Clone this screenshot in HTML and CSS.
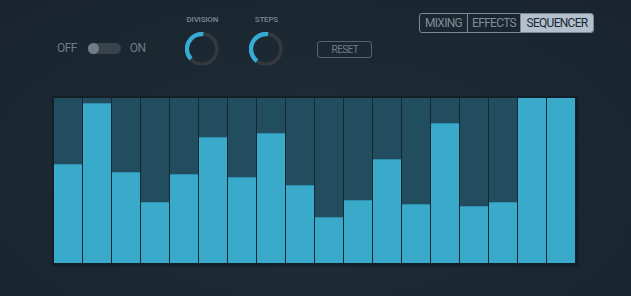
FILE: index.html
```html
<!DOCTYPE html>
<html>
<head>
<meta charset="utf-8">
<link rel="stylesheet" href="styles.css">
</head>
<body>
<div class="app">
  <header class="header">
    <div class="power">
      <span class="power-label">OFF</span>
      <span class="switch"><span class="switch-knob"></span></span>
      <span class="power-label">ON</span>
    </div>
    <div class="knob knob-division">
      <span class="knob-label">DIVISION</span>
      <svg class="knob-dial" width="34" height="34" viewBox="0 0 34 34">
        <circle cx="17" cy="17" r="15" fill="none" stroke="#33393f" stroke-width="3.6"/>
        <path d="M5.85 27.04 A15 15 0 0 1 18.31 2.06" fill="none" stroke="#37abd2" stroke-width="4.4"/>
      </svg>
    </div>
    <div class="knob knob-steps">
      <span class="knob-label">STEPS</span>
      <svg class="knob-dial" width="34" height="34" viewBox="0 0 34 34">
        <circle cx="17" cy="17" r="15" fill="none" stroke="#33393f" stroke-width="3.6"/>
        <path d="M7.97 28.98 A15 15 0 0 1 19.09 2.15" fill="none" stroke="#37abd2" stroke-width="4.4"/>
      </svg>
    </div>
    <button class="reset">RESET</button>
    <nav class="tabs">
      <span class="tab tab-mixing">MIXING</span>
      <span class="tab tab-effects">EFFECTS</span>
      <span class="tab tab-sequencer tab-active">SEQUENCER</span>
    </nav>
  </header>
  <section class="sequencer">
    <div class="step"><div class="fill" style="height:99px"></div></div>
    <div class="step"><div class="fill" style="height:160px"></div></div>
    <div class="step"><div class="fill" style="height:91px"></div></div>
    <div class="step"><div class="fill" style="height:61px"></div></div>
    <div class="step"><div class="fill" style="height:89px"></div></div>
    <div class="step"><div class="fill" style="height:126px"></div></div>
    <div class="step"><div class="fill" style="height:86px"></div></div>
    <div class="step"><div class="fill" style="height:130px"></div></div>
    <div class="step"><div class="fill" style="height:78px"></div></div>
    <div class="step"><div class="fill" style="height:46px"></div></div>
    <div class="step"><div class="fill" style="height:63px"></div></div>
    <div class="step"><div class="fill" style="height:104px"></div></div>
    <div class="step"><div class="fill" style="height:59px"></div></div>
    <div class="step"><div class="fill" style="height:140px"></div></div>
    <div class="step"><div class="fill" style="height:57px"></div></div>
    <div class="step"><div class="fill" style="height:61px"></div></div>
    <div class="step"><div class="fill full" style="height:165px"></div></div>
    <div class="step"><div class="fill full" style="height:165px"></div></div>
  </section>
</div>
</body>
</html>
```

FILE: styles.css
```css
html, body {
  margin: 0;
  padding: 0;
}

body {
  width: 631px;
  height: 296px;
  overflow: hidden;
  background: radial-gradient(ellipse 70% 80% at 50% 60%, #1f2f39 0%, #1b2832 60%, #19242e 100%);
  font-family: Roboto, "Liberation Sans", sans-serif;
}

.app {
  width: 631px;
  height: 296px;
  display: flex;
  flex-direction: column;
}

.header {
  display: flex;
  align-items: flex-start;
  height: 96px;
  padding-left: 57px;
  padding-right: 37px;
  box-sizing: border-box;
}

.power {
  display: flex;
  align-items: center;
  margin-top: 42px;
  height: 13px;
}

.power-label {
  font-size: 12px;
  letter-spacing: -0.6px;
  color: #6f7c87;
  line-height: 13px;
}

.switch {
  position: relative;
  width: 33px;
  height: 11px;
  border-radius: 6px;
  background: #39434b;
  margin: 0 9px 0 11px;
}

.switch-knob {
  position: absolute;
  left: 0;
  top: 0;
  width: 11px;
  height: 11px;
  border-radius: 50%;
  background: #6d7e88;
}

.knob {
  display: flex;
  flex-direction: column;
  align-items: center;
  width: 34px;
  margin-top: 15px;
}

.knob-division {
  margin-left: 40px;
}

.knob-steps {
  margin-left: 30px;
}

.knob-label {
  font-size: 8px;
  font-weight: 500;
  letter-spacing: -0.2px;
  line-height: 10px;
  color: #7a8792;
  white-space: nowrap;
}

.knob-dial {
  display: block;
  margin-top: 7px;
}

.reset {
  margin-left: 34px;
  margin-top: 41px;
  width: 55px;
  height: 17px;
  padding: 0;
  border: 1px solid #56636c;
  border-radius: 3px;
  background: transparent;
  color: #6f7c87;
  font-family: Roboto, "Liberation Sans", sans-serif;
  font-size: 10px;
  letter-spacing: -0.6px;
  line-height: 15px;
}

.tabs {
  display: flex;
  margin-left: auto;
  margin-top: 13px;
  height: 20px;
  border: 1px solid #7b8a95;
  border-radius: 3px;
  overflow: hidden;
  box-sizing: border-box;
}

.tab {
  display: flex;
  align-items: center;
  justify-content: center;
  font-size: 12px;
  letter-spacing: -0.7px;
  color: #7f8e99;
  border-left: 1px solid #7b8a95;
  white-space: nowrap;
}

.tab:first-child {
  border-left: none;
}

.tab-mixing {
  width: 47px;
}

.tab-effects {
  width: 52px;
}

.tab-sequencer {
  width: 72px;
}

.tab-active {
  background: #b3c1ce;
  color: #1b2733;
}

.sequencer {
  display: flex;
  gap: 1px;
  margin-left: 52px;
  width: 525px;
  height: 169px;
  box-sizing: border-box;
  border: 2px solid #141f27;
  background: #172731;
  box-shadow: 1px 1px 1px rgba(10, 18, 24, 0.5);
}

.step {
  flex: 1;
  display: flex;
  flex-direction: column;
  justify-content: flex-end;
  background: #224d5f;
}

.fill {
  background: #3aaacb;
  border-top: 1px solid #2f8eae;
  box-sizing: border-box;
}

.fill.full {
  border-top: none;
}
```
